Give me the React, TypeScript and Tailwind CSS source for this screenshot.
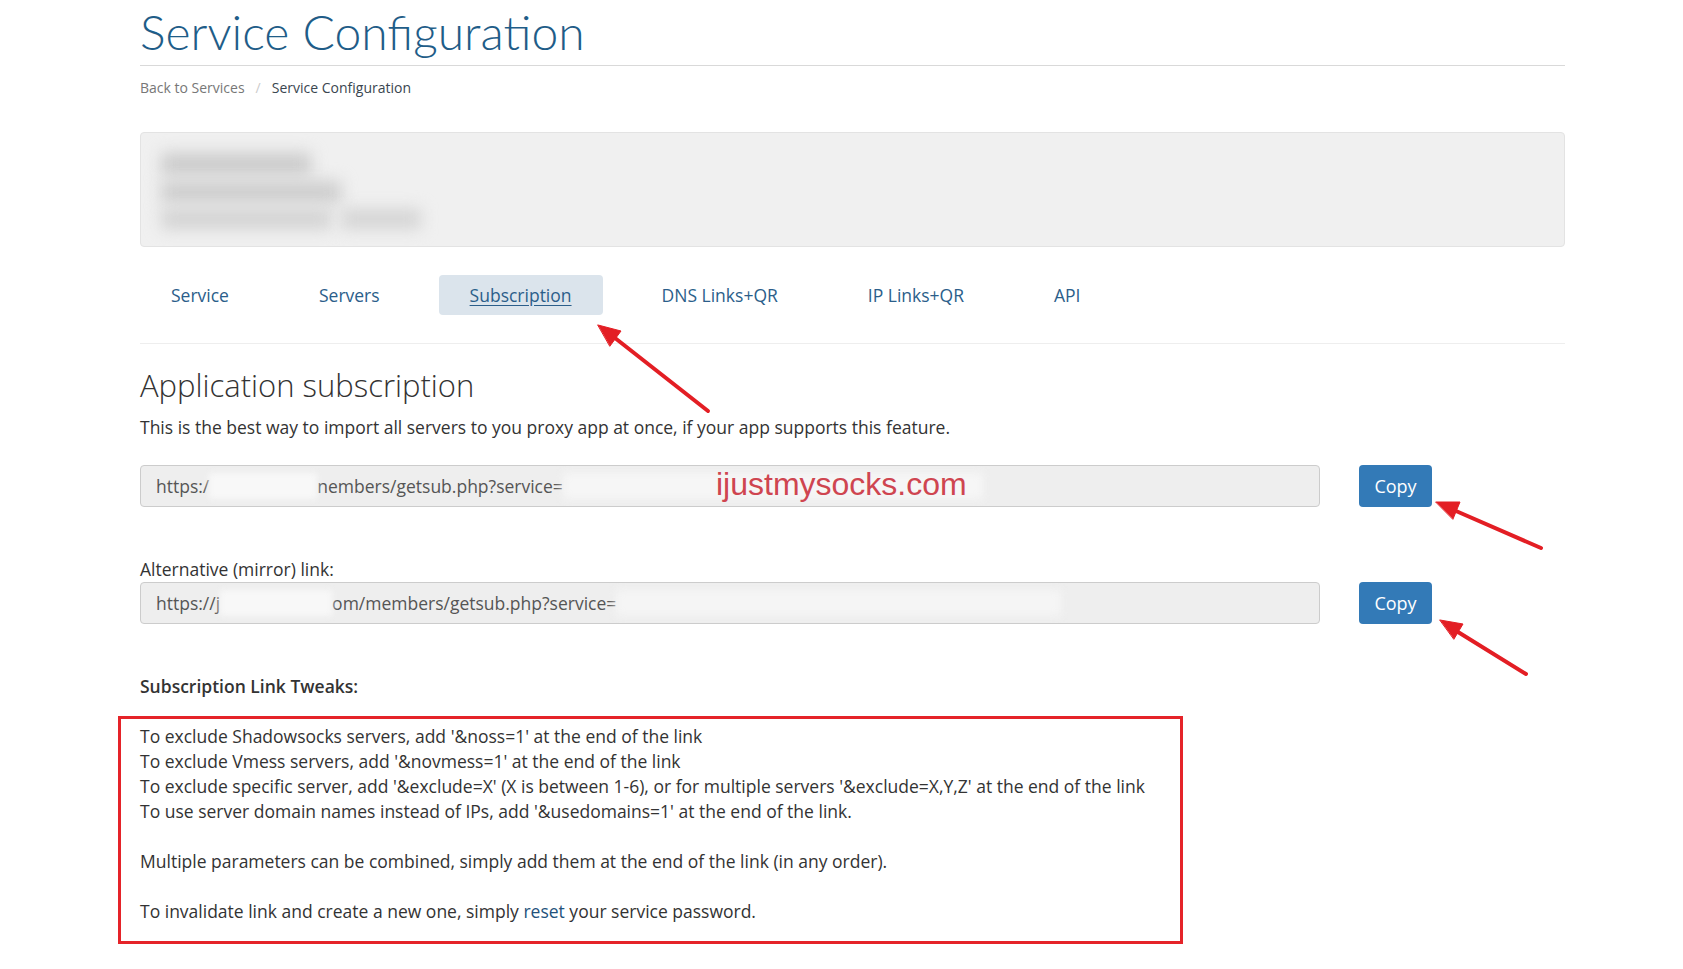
import React from "react";

const tabs = ["Service", "Servers", "Subscription", "DNS Links+QR", "IP Links+QR", "API"];

function Blur({ className }: { className: string }) {
  return <span className={"inline-block blur-[3px] " + className} />;
}

function CopyButton() {
  return (
    <button className="h-[42px] w-[73px] shrink-0 rounded-[4px] bg-[#337ab7] text-[18px] text-white">
      Copy
    </button>
  );
}

function Arrows() {
  return (
    <svg className="pointer-events-none absolute left-0 top-0" width="1683" height="969">
      <g fill="#e31e24" stroke="#e31e24" strokeLinecap="round">
        <line x1="708" y1="411" x2="615" y2="338" strokeWidth="4" />
        <polygon points="598,325 621,331 610,346" strokeWidth="1" />
        <line x1="1541" y1="548" x2="1456" y2="511" strokeWidth="4" />
        <polygon points="1436,502 1460,502 1453,519" strokeWidth="1" />
        <line x1="1526" y1="674" x2="1458" y2="632" strokeWidth="4" />
        <polygon points="1440,620 1463,624 1454,639" strokeWidth="1" />
      </g>
    </svg>
  );
}

export default function App() {
  return (
    <div className="relative min-h-[969px] bg-white font-['Open_Sans',sans-serif] text-[#333]">
      <div className="ml-[140px] w-[1425px]">
        {/* Header */}
        <h1 className="h-[66px] border-b border-[#d9d9d9] pt-[2px] font-['Lato',sans-serif] text-[48px] font-light leading-[60px] text-[#1f5d88]">
          Service Configuration
        </h1>
        <div className="mt-[11px] text-[14px] leading-[22px]">
          <span className="text-[#777]">Back to Services</span>
          <span className="px-[11px] text-[#ccc]">/</span>
          <span className="text-[#3a4650]">Service Configuration</span>
        </div>

        {/* Service summary (blurred) */}
        <div className="mt-[33px] flex h-[115px] flex-col gap-[6px] overflow-hidden rounded-[4px] border border-[#e3e3e3] bg-[#f0f0f0] px-[20px] pt-[20px]">
          <Blur className="h-[22px] w-[150px] bg-[#cbcbcb] blur-[8px]" />
          <Blur className="h-[22px] w-[180px] bg-[#cdcdcd] blur-[8px]" />
          <div className="flex gap-[10px]">
            <Blur className="h-[20px] w-[170px] bg-[#d2d2d2] blur-[8px]" />
            <Blur className="h-[20px] w-[80px] bg-[#d4d4d4] blur-[8px]" />
          </div>
        </div>

        {/* Tabs */}
        <div className="mt-[28px] flex gap-[28px]">
          {tabs.map((t) => (
            <a
              key={t}
              className={
                "h-[40px] rounded-[4px] px-[31px] text-[17.5px] leading-[40px] text-[#2b5e8a] " +
                (t === "Subscription" ? "bg-[#dbe4ec] underline underline-offset-[3px]" : "")
              }
            >
              {t}
            </a>
          ))}
        </div>
        <div className="mt-[28px] border-t border-[#eee]" />

        {/* Subscription */}
        <h3 className="mt-[21px] text-[31px] font-light leading-[40px] text-[#333]">Application subscription</h3>
        <p className="mt-[10px] text-[17.5px] leading-[25px] text-[#333]">
          This is the best way to import all servers to you proxy app at once, if your app supports this feature.
        </p>

        <div className="mt-[25px] flex items-center gap-[39px]">
          <div className="relative flex h-[42px] w-[1180px] items-center overflow-hidden rounded-[4px] border border-[#ccc] bg-[#eee] px-[15px] text-[17.5px] text-[#555]">
            <span>https:/</span>
            <Blur className="h-[26px] w-[108px] bg-[#f8f8f8]" />
            <span>nembers/getsub.php?service=</span>
            <Blur className="h-[26px] w-[420px] bg-[#f6f6f6] blur-[5px]" />
            <span className="absolute left-[575px] top-[0px] font-['Liberation_Sans',sans-serif] text-[32px] leading-[36px] text-[#cf4550]">
              ijustmysocks.com
            </span>
          </div>
          <CopyButton />
        </div>

        <div className="mt-[50px] text-[17.5px] leading-[25px]">Alternative (mirror) link:</div>
        <div className="flex items-center gap-[39px]">
          <div className="flex h-[42px] w-[1180px] items-center overflow-hidden rounded-[4px] border border-[#ccc] bg-[#eee] px-[15px] text-[17.5px] text-[#555]">
            <span>https://j</span>
            <Blur className="h-[26px] w-[112px] bg-[#f8f8f8]" />
            <span>om/members/getsub.php?service=</span>
            <Blur className="h-[26px] w-[445px] bg-[#f5f5f5] blur-[5px]" />
          </div>
          <CopyButton />
        </div>

        <div className="mt-[50px] text-[17.5px] font-semibold leading-[25px]">Subscription Link Tweaks:</div>

        <div className="-ml-[22px] mt-[17px] w-[1065px] border-[3px] border-[#e52329] pb-[17px] pl-[19px] pt-[5px] text-[17.5px] leading-[25px] text-[#333]">
          To exclude Shadowsocks servers, add '&amp;noss=1' at the end of the link
          <br />
          To exclude Vmess servers, add '&amp;novmess=1' at the end of the link
          <br />
          To exclude specific server, add '&amp;exclude=X' (X is between 1-6), or for multiple servers '&amp;exclude=X,Y,Z' at
          the end of the link
          <br />
          To use server domain names instead of IPs, add '&amp;usedomains=1' at the end of the link.
          <br />
          <br />
          Multiple parameters can be combined, simply add them at the end of the link (in any order).
          <br />
          <br />
          To invalidate link and create a new one, simply <a className="text-[#23527c]">reset</a> your service password.
        </div>
      </div>
      <Arrows />
    </div>
  );
}
